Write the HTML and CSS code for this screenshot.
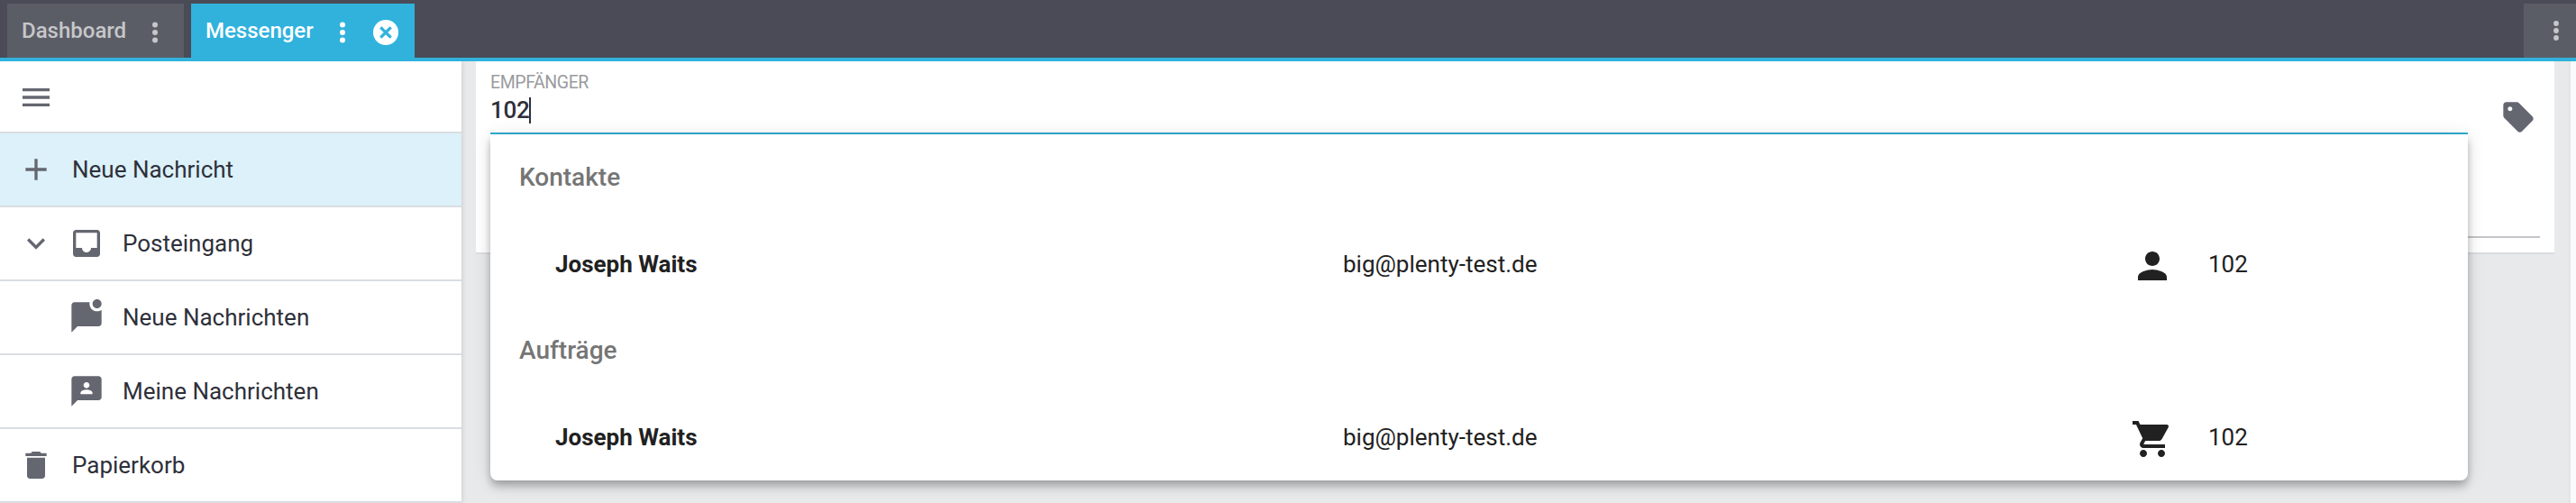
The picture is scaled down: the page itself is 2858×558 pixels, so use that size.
FILE: index.html
```html
<!DOCTYPE html>
<html lang="de">
<head>
<meta charset="utf-8">
<title>Messenger</title>
<link rel="stylesheet" href="styles.css">
</head>
<body>
<header class="topbar">
  <div class="tab">
    <span class="tab-label">Dashboard</span>
    <svg class="dots" viewBox="0 0 6 24"><circle cx="3" cy="3.5" r="3"/><circle cx="3" cy="12" r="3"/><circle cx="3" cy="20.5" r="3"/></svg>
  </div>
  <div class="tab tab-active">
    <span class="tab-label">Messenger</span>
    <svg class="dots" viewBox="0 0 6 24"><circle cx="3" cy="3.5" r="3"/><circle cx="3" cy="12" r="3"/><circle cx="3" cy="20.5" r="3"/></svg>
    <svg class="close" viewBox="0 0 28 28"><circle cx="14" cy="14" r="14"/><path d="M8.3 8.3 19.7 19.7M19.7 8.3 8.3 19.7"/></svg>
  </div>
  <div class="more">
    <svg class="dots dots-more" viewBox="0 0 6 24"><circle cx="3" cy="4" r="2.9"/><circle cx="3" cy="12" r="2.9"/><circle cx="3" cy="20" r="2.9"/></svg>
  </div>
</header>
<div class="content">
  <nav class="sidebar">
    <div class="menu-head">
      <svg class="icon" viewBox="0 0 24 24"><path d="M3 18h18v-2H3v2zm0-5h18v-2H3v2zm0-7v2h18V6H3z"/></svg>
    </div>
    <div class="item item-active">
      <svg class="icon" viewBox="0 0 24 24"><path d="M19 13h-6v6h-2v-6H5v-2h6V5h2v6h6v2z"/></svg>
      <span class="item-text">Neue Nachricht</span>
    </div>
    <div class="item">
      <svg class="icon" viewBox="0 0 24 24"><path d="M16.59 8.59 12 13.17 7.41 8.59 6 10l6 6 6-6z"/></svg>
      <svg class="icon" viewBox="0 0 24 24"><path d="M19 3H4.99C3.88 3 3.01 3.89 3.01 5L3 19c0 1.1.88 2 1.99 2H19c1.1 0 2-.9 2-2V5c0-1.11-.9-2-2-2zm0 12h-4c0 1.66-1.35 3-3 3s-3-1.34-3-3H4.99V5H19v10z"/></svg>
      <span class="item-text">Posteingang</span>
    </div>
    <div class="item item-nested">
      <svg class="icon" viewBox="0 0 24 24"><path d="M22 6.98V16c0 1.1-.9 2-2 2H6l-4 4V4c0-1.1.9-2 2-2h10.1c-.06.32-.1.66-.1 1 0 2.76 2.24 5 5 5 1.13 0 2.16-.39 3-1.02zM16 3c0 1.66 1.34 3 3 3s3-1.34 3-3-1.34-3-3-3-3 1.34-3 3z"/></svg>
      <span class="item-text">Neue Nachrichten</span>
    </div>
    <div class="item item-nested">
      <svg class="icon" viewBox="0 0 24 24"><path d="M20 2H4.01c-1.1 0-2 .9-2 2L2 22l4-4h14c1.1 0 2-.9 2-2V4c0-1.1-.9-2-2-2zm-8 4c1.1 0 2 .9 2 2s-.9 2-2 2-2-.9-2-2 .9-2 2-2zm4 8H8v-.57c0-.81.48-1.53 1.22-1.85.85-.37 1.79-.58 2.78-.58.99 0 1.93.21 2.78.58.74.32 1.22 1.04 1.22 1.85V14z"/></svg>
      <span class="item-text">Meine Nachrichten</span>
    </div>
    <div class="item">
      <svg class="icon" viewBox="0 0 24 24"><path d="M6 19c0 1.1.9 2 2 2h8c1.1 0 2-.9 2-2V7H6v12zM19 4h-3.5l-1-1h-5l-1 1H5v2h14V4z"/></svg>
      <span class="item-text">Papierkorb</span>
    </div>
  </nav>
  <main class="main">
    <section class="card">
      <div class="row">
        <div class="field">
          <label class="field-label">EMPFÄNGER</label>
          <div class="field-input"><span>102</span><i class="caret"></i></div>
          <div class="dropdown">
            <div class="group">Kontakte</div>
            <div class="option">
              <span class="name">Joseph Waits</span>
              <span class="mail">big@plenty-test.de</span>
              <svg class="icon-lg" viewBox="0 0 24 24"><path d="M12 12c2.21 0 4-1.79 4-4s-1.79-4-4-4-4 1.79-4 4 1.79 4 4 4zm0 2c-2.67 0-8 1.34-8 4v2h16v-2c0-2.66-5.33-4-8-4z"/></svg>
              <span class="number">102</span>
            </div>
            <div class="group">Aufträge</div>
            <div class="option">
              <span class="name">Joseph Waits</span>
              <span class="mail">big@plenty-test.de</span>
              <svg class="icon-lg" viewBox="0 0 24 24"><path d="M7 18c-1.1 0-1.99.9-1.99 2S5.9 22 7 22s2-.9 2-2-.9-2-2-2zM1 2v2h2l3.6 7.59-1.35 2.45c-.16.28-.25.61-.25.96 0 1.1.9 2 2 2h12v-2H7.42c-.14 0-.25-.11-.25-.25l.03-.12.9-1.63h7.45c.75 0 1.41-.41 1.75-1.03l3.58-6.49c.08-.14.12-.31.12-.48 0-.55-.45-1-1-1H5.21l-.94-2H1zm16 16c-1.1 0-1.99.9-1.99 2s.89 2 1.99 2 2-.9 2-2-.9-2-2-2z"/></svg>
              <span class="number">102</span>
            </div>
          </div>
        </div>
        <svg class="icon tag" viewBox="0 0 24 24"><path d="M21.41 11.58l-9-9C12.05 2.22 11.55 2 11 2H4c-1.1 0-2 .9-2 2v7c0 .55.22 1.05.59 1.42l9 9c.36.36.86.58 1.41.58.55 0 1.05-.22 1.41-.59l7-7c.37-.36.59-.86.59-1.41 0-.55-.23-1.06-.59-1.42zM6.5 8C5.67 8 5 7.33 5 6.5S5.67 5 6.5 5 8 5.67 8 6.5 7.33 8 6.5 8z"/></svg>
      </div>
      <div class="second-field"></div>
    </section>
  </main>
</div>
</body>
</html>
```
FILE: styles.css
```css
* {
  box-sizing: border-box;
}

body {
  margin: 0;
  width: 2858px;
  height: 558px;
  overflow: hidden;
  background: #fafafa;
  color: #2e303a;
  font-family: Roboto, "Liberation Sans", sans-serif;
  font-size: 26px;
}

svg {
  display: block;
  flex: none;
}

/* Top bar */
.topbar {
  display: flex;
  gap: 8px;
  height: 68px;
  padding: 4px 0 0 8px;
  background: #4a4b57;
  border-bottom: 4px solid #30b2dd;
}

.tab {
  display: flex;
  align-items: center;
  width: 196px;
  height: 60px;
  padding: 4px 29px 0 16px;
  background: #5b5d66;
  color: #c6c7ca;
  font-size: 24px;
  font-weight: 500;
}

.tab-label {
  flex: 1;
  line-height: 32px;
  margin-top: -5px;
}

.tab-active {
  width: 248px;
  padding-right: 18px;
  background: #30b2dd;
  color: #fff;
}

.dots {
  width: 6px;
  height: 24px;
  fill: currentColor;
}

.close {
  width: 28px;
  height: 28px;
  margin-left: 31px;
}

.close circle {
  fill: #fff;
}

.close path {
  fill: none;
  stroke: #30b2dd;
  stroke-width: 3.3;
}

.more {
  width: 58px;
  height: 60px;
  margin-left: auto;
  padding: 18px 0 0 33px;
  background: #5b5d66;
  color: #c6c7ca;
}

/* Sidebar */
.content {
  display: flex;
  height: 490px;
}

.sidebar {
  position: relative;
  z-index: 1;
  flex: none;
  width: 512px;
  background: #fff;
  box-shadow: 0 0 6px rgba(0, 0, 0, .16);
  clip-path: inset(0 -16px 0 0);
}

.icon {
  width: 40px;
  height: 40px;
  fill: #646670;
}

.menu-head {
  height: 80px;
  padding: 20px;
  border-bottom: 2px solid #dadde2;
}

.item {
  display: flex;
  align-items: center;
  gap: 16px;
  height: 82px;
  padding-left: 20px;
  border-bottom: 2px solid #dadde2;
}

.item .item-text {
  margin-left: 4px;
  line-height: 32px;
}

.item-active {
  background: #dcf1f9;
}

.item-nested {
  padding-left: 76px;
}

/* Message form */
.main {
  flex: none;
  width: 2340px;
  padding: 0 18px 0 16px;
  background: #e8e9eb;
  border-right: 2px solid #e4e4e6;
}

.card {
  width: 2306px;
  height: 214px;
  padding: 0 16px;
  background: #fff;
  border-bottom: 2px solid #dadde1;
}

.row {
  display: flex;
  height: 81px;
}

.field {
  position: relative;
  width: 2194px;
  height: 81px;
  padding-top: 12px;
  border-bottom: 2px solid #30add5;
}

.field-label {
  display: block;
  height: 24px;
  color: #9a9ba0;
  font-size: 19.5px;
  letter-spacing: -.4px;
  line-height: 24px;
}

.field-input {
  display: flex;
  align-items: center;
  height: 36px;
  font-weight: 500;
  letter-spacing: -.3px;
}

.caret {
  width: 2px;
  height: 29px;
  background: #2e303a;
}

.tag {
  margin: 42px 0 0 36px;
}

.second-field {
  height: 115px;
  border-bottom: 2px solid #c5c4c8;
}

/* Suggestion list over the form */
.dropdown {
  position: absolute;
  top: 81px;
  left: 0;
  width: 2194px;
  height: 384px;
  background: #fff;
  border-radius: 0 0 8px 8px;
  color: #212121;
  box-shadow: 0 4px 8px -2px rgba(0, 0, 0, .2), 0 8px 10px rgba(0, 0, 0, .14), 0 2px 20px rgba(0, 0, 0, .12);
}

.group {
  height: 96px;
  padding-left: 32px;
  color: #757575;
  font-size: 28px;
  font-weight: 500;
  line-height: 96px;
}

.option {
  display: grid;
  grid-template-columns: 874px 874px 86px auto;
  align-items: center;
  height: 96px;
  padding-left: 72px;
}

.name {
  font-weight: 700;
}

.icon-lg {
  width: 48px;
  height: 48px;
  margin-top: 4px;
  fill: #212121;
}
```
